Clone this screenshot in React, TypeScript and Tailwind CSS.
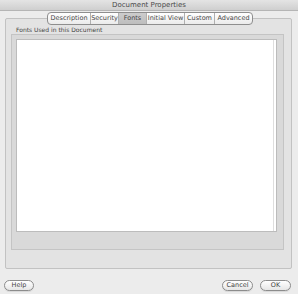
const tabs = ["Description", "Security", "Fonts", "Initial View", "Custom", "Advanced"];
const tabWidths = ["w-[42px]", "w-[28px]", "w-[28px]", "w-[38px]", "w-[30px]", "w-[38px]"];

function PushButton({ label, width }: { label: string; width: string }) {
  return (
    <button
      className={`${width} h-[11px] rounded-full border border-[#8c8c8c] bg-gradient-to-b from-[#ffffff] to-[#e6e6e6] text-[6.5px] leading-[9px] text-[#444] shadow-[0_1px_0_rgba(0,0,0,0.08)]`}
    >
      {label}
    </button>
  );
}

export default function App() {
  return (
    <div
      className="w-[298px] h-[294px] bg-[#ececec] flex flex-col overflow-hidden text-[#333]"
      style={{ fontFamily: '"Lucida Grande", "DejaVu Sans", "Liberation Sans", sans-serif' }}
    >
      {/* title bar */}
      <div className="h-[11px] shrink-0 bg-gradient-to-b from-[#e4e4e4] to-[#cfcfcf] border-b border-[#b5b5b5] flex items-center justify-center text-[7px] text-[#4a4a4a]">
        Document Properties
      </div>

      {/* tabs */}
      <div className="relative z-10 mt-[1px] flex justify-center pl-[2px]">
        <div className="flex h-[13px] rounded-[4px] border border-[#8e8e8e] bg-gradient-to-b from-[#ffffff] to-[#ebebeb] overflow-hidden">
          {tabs.map((t, i) => (
            <div
              key={t}
              className={`${tabWidths[i]} flex items-center justify-center text-[6.5px] text-[#474747] ${
                i > 0 ? "border-l border-[#b0b0b0]" : ""
              } ${t === "Fonts" ? "bg-gradient-to-b from-[#cdcdcd] to-[#bdbdbd]" : ""}`}
            >
              {t}
            </div>
          ))}
        </div>
      </div>

      {/* outer group box */}
      <div className="ml-[5px] w-[287px] mt-[-7px] h-[251px] border border-[#c2c2c2] bg-[#e3e3e3] rounded-[2px] pl-[5px] pr-[7px] pt-[7px] flex flex-col">
        <div className="h-[8px] pl-[5px] text-[6px] leading-[8px] text-[#444]">Fonts Used in this Document</div>
        <div className="h-[216px] border border-[#c4c4c4] bg-[#d9d9d9] pl-[4px] pr-[6px] pt-[4px]">
          <div className="h-[193px] border border-[#bcbcbc] bg-white flex">
            <div className="flex-1" />
            <div className="w-[3px] border-l border-[#dedede]" />
          </div>
        </div>
      </div>

      {/* buttons */}
      <div className="mt-[11px] flex items-center px-[4px]">
        <PushButton label="Help" width="w-[30px]" />
        <div className="flex-1" />
        <PushButton label="Cancel" width="w-[31px]" />
        <div className="w-[7px]" />
        <PushButton label="OK" width="w-[31px]" />
        <div className="w-[3px]" />
      </div>
    </div>
  );
}
